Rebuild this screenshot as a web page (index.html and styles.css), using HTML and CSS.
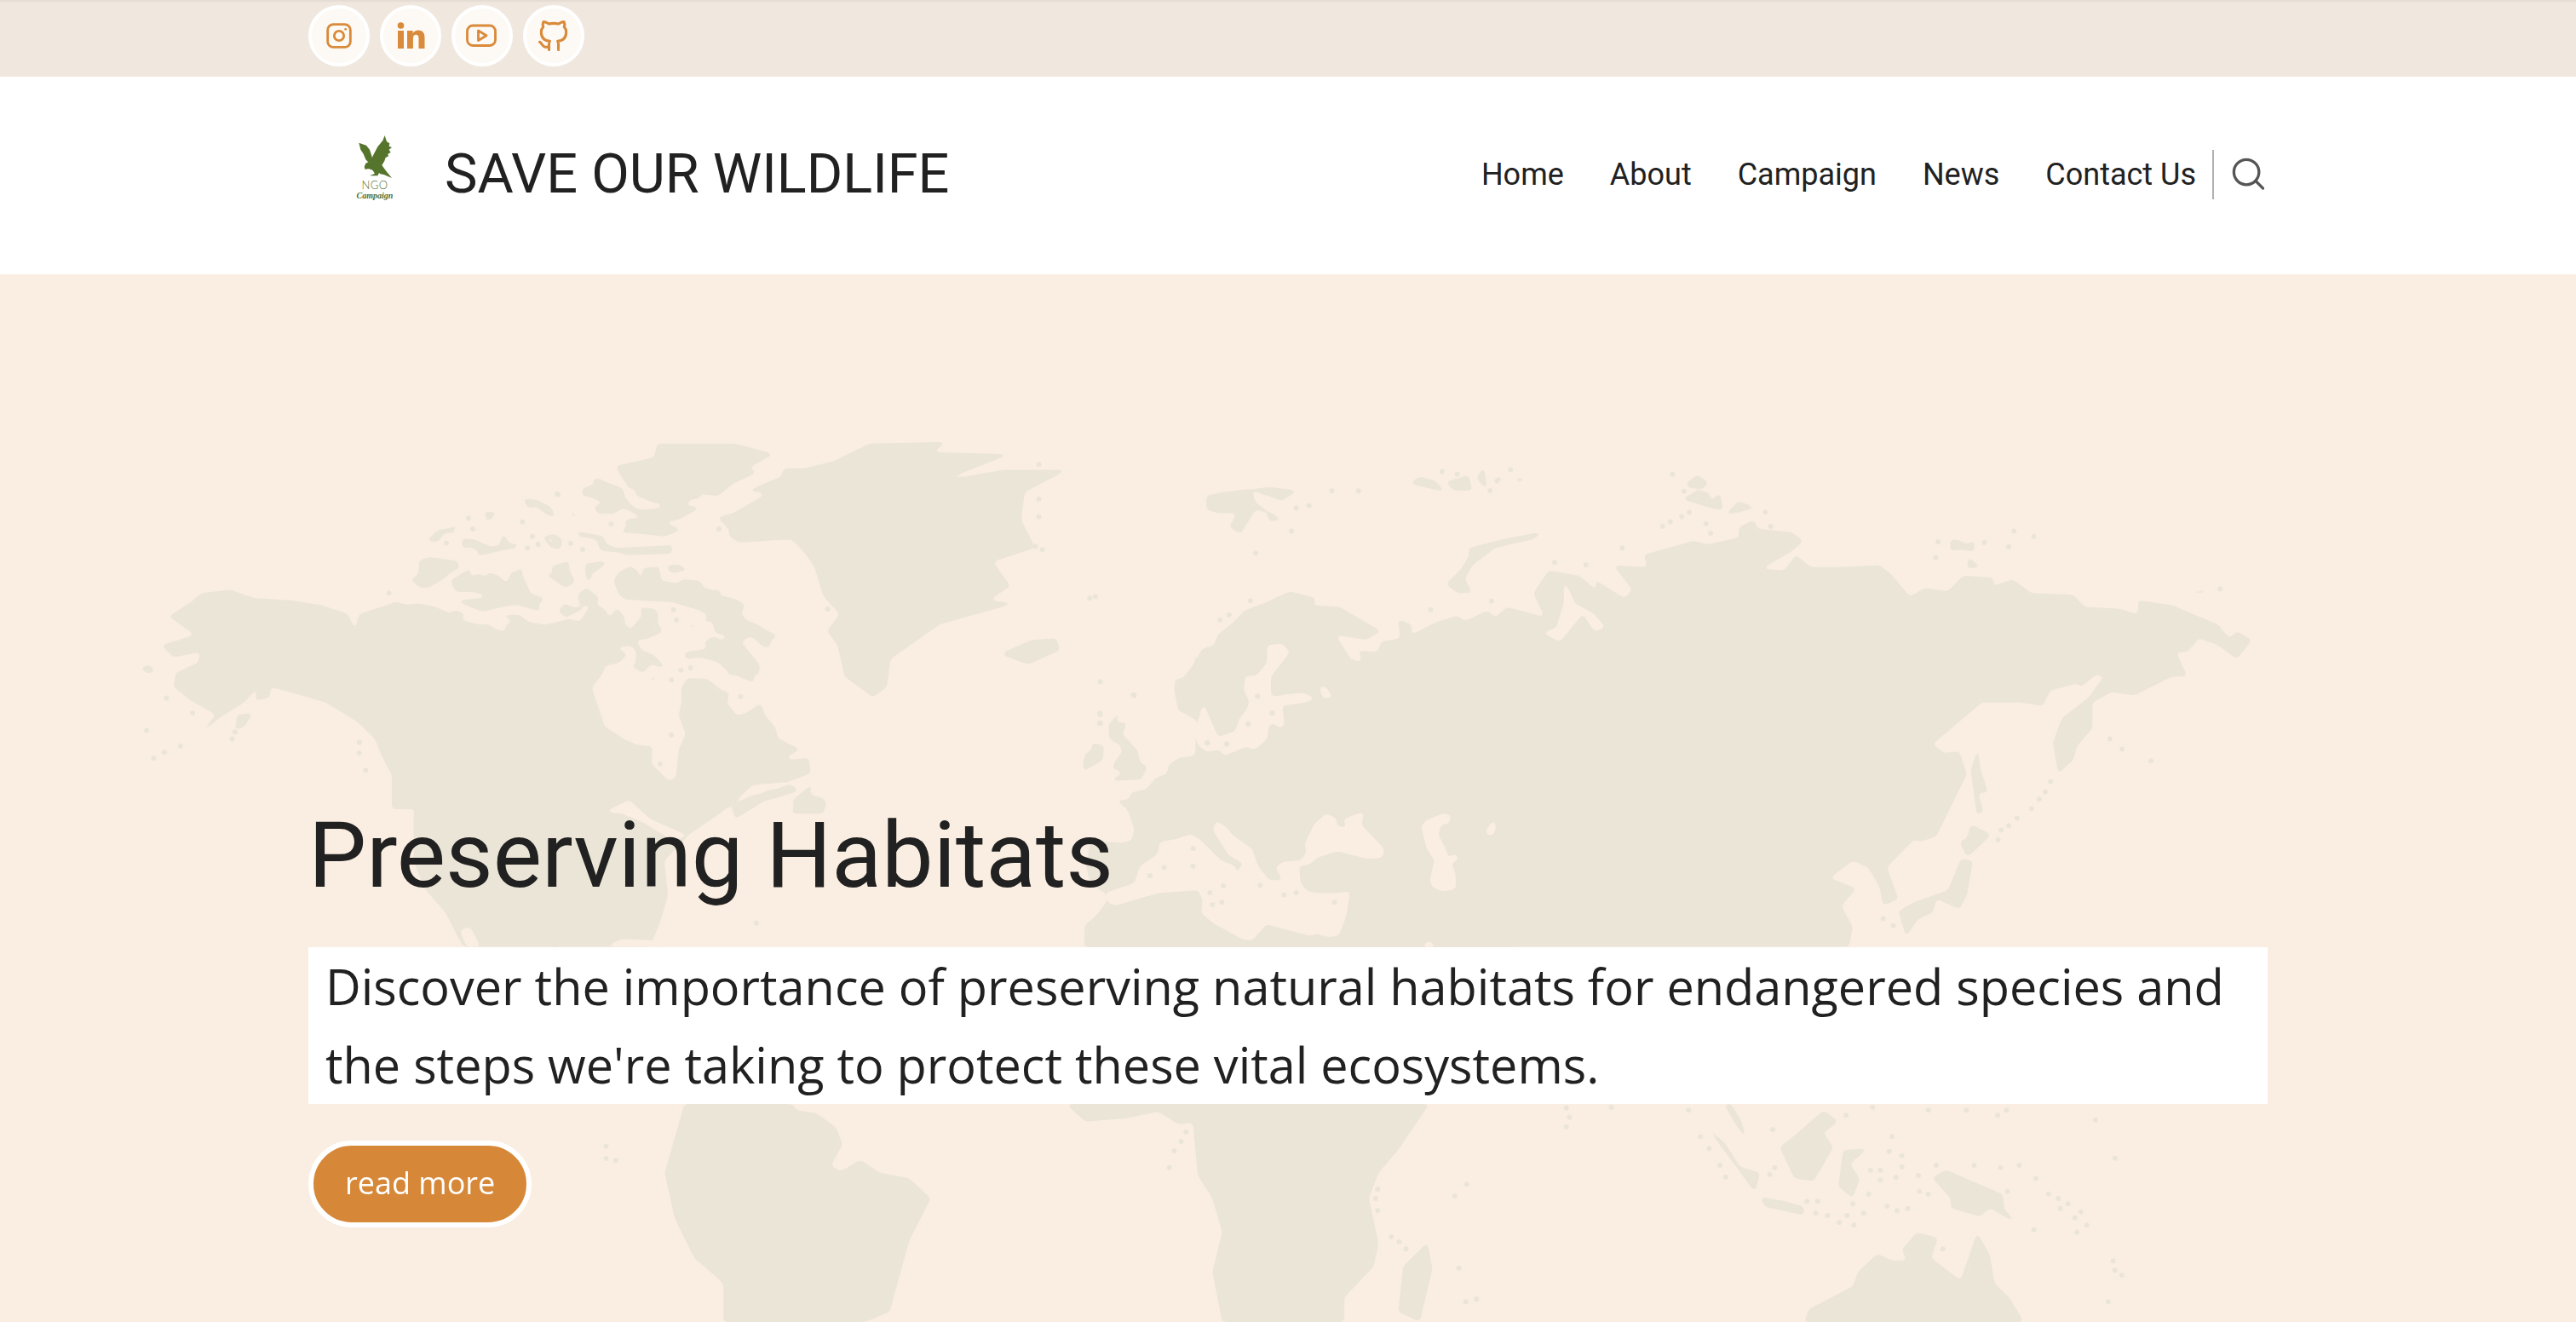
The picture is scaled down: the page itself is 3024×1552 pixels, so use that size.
FILE: index.html
```html
<!DOCTYPE html>
<html lang="en">
<head>
    <meta charset="UTF-8">
    <title>Save Our Wildlife</title>
    <link rel="stylesheet" href="styles.css">
</head>
<body>
    <div class="topbar">
        <div class="socials">
            <a class="social" href="#">
                <svg width="40" height="40" viewBox="0 0 24 24" class="icon-line"><rect x="4" y="4" width="16" height="16" rx="4"/><circle cx="12" cy="12" r="3.4"/><path d="M16.6 7.4v.01"/></svg>
            </a>
            <a class="social" href="#">
                <svg width="40" height="40" viewBox="0 0 40 40" class="icon-fill"><circle cx="8.500" cy="8" r="3.800"/><rect x="5" y="14" width="7" height="21"/><path d="M16 14h6.600v3c1.400-2.200 3.700-3.600 6.500-3.600 5.500 0 7.400 3.500 7.400 8.600v13h-7V23c0-2.700-.8-4.300-3.200-4.300-2.600 0-3.400 1.900-3.400 4.500V35H16z"/></svg>
            </a>
            <a class="social" href="#">
                <svg width="40" height="40" viewBox="0 0 40 40" class="icon-line-thick"><rect x="2.500" y="8" width="33" height="23.500" rx="6.500"/><path d="M15.500 14v11.500l9.500-5.700z"/></svg>
            </a>
            <a class="social" href="#">
                <svg width="44" height="44" viewBox="0 0 24 24" class="icon-line"><path d="M9 19c-4.300 1.400-4.300-2.500-6-3m12 5v-3.500c0-1 .1-1.400-.5-2 2.800-.3 5.500-1.400 5.500-6a4.600 4.600 0 0 0-1.300-3.200 4.200 4.200 0 0 0-.1-3.200s-1.100-.3-3.500 1.300a12.300 12.300 0 0 0-6.200 0C6.500 2.800 5.400 3.100 5.400 3.100a4.200 4.200 0 0 0-.1 3.200A4.600 4.600 0 0 0 4 9.500c0 4.600 2.700 5.700 5.500 6-.6.6-.6 1.200-.5 2V21"/></svg>
            </a>
        </div>
    </div>

    <header class="header">
        <a class="logo" href="#">
            <svg class="logo-bird" width="40" height="50" viewBox="120 90 120 150">
                <path d="M215 90L222 112 232 118 230 128 240 132 230 140 236 150 226 155 228 163 218 168 214 180 205 195 222 218 240 240 212 228 200 226 195 222 190 232 162 232 180 224 172 212 160 208 154 208 146 210 143 200 148 188 165 180 175 158 190 130 208 108z"/>
                <path d="M124 116L150 125 162 140 170 165 172 178 158 185 148 175 140 155 130 140z"/>
            </svg>
            <span class="logo-ngo">NGO</span>
            <span class="logo-campaign">Campaign</span>
        </a>
        <h1 class="site-title">SAVE OUR WILDLIFE</h1>
        <nav class="nav">
            <a href="#">Home</a>
            <a href="#">About</a>
            <a href="#">Campaign</a>
            <a href="#">News</a>
            <a href="#">Contact Us</a>
        </nav>
        <span class="divider"></span>
        <svg class="search" width="38" height="38" viewBox="0 0 40 40"><circle cx="18" cy="18" r="15.500"/><path d="M29.500 29l9 9"/></svg>
    </header>

    <section class="hero">
        <svg class="map" width="3024" height="1230" viewBox="0 322 3024 1230">
            <defs>
                <filter id="blob" x="0" y="322" width="3024" height="1230" filterUnits="userSpaceOnUse">
                    <feGaussianBlur stdDeviation="2.600"/>
                    <feComponentTransfer><feFuncA type="linear" slope="7" intercept="-3"/></feComponentTransfer>
                </filter>
            </defs>

            <g class="land" filter="url(#blob)">
                <g transform="translate(100 480) scale(.8293 .408)">
                    <path d="M118 597L150 555 165 530 205 520 240 545 290 550 335 565 372 590 382 635 388 590 440 556 700 700 750 1000 905 1155 855 1225 820 1300 825 1400 815 1470 800 1548 535 1548 510 1450 480 1380 465 1300 465 1160 480 1135 440 1075 420 1000 410 950 385 900 340 845 290 815 262 800 262 830 240 840 245 800 225 845 190 890 150 960 185 880 150 840 125 800 128 760 160 730 163 700 125 715 108 680 155 650z"/>
                    <path d="M1000 180L1060 150 1110 100 1220 95 1200 125 1310 130 1215 205 1300 175 1390 175 1330 240 1325 320 1345 400 1285 440 1310 510 1280 550 1315 560 1210 620 1140 720 1135 800 1115 830 1075 770 1065 680 1050 640 1068 590 1045 540 1030 440 1000 375 925 385 900 320 960 250z"/>
                    <path d="M750 165L805 140 810 100 920 100 975 130 930 180 895 245 840 240 770 230z"/>
                    <path d="M1300 700L1340 665 1375 660 1380 695 1335 735 1300 710z"/>
                    <path d="M215 880L238 875 225 915 212 925z"/>
                    <path d="M78 745L90 735 100 755 88 762z"/>
                    <path d="M915 1145L950 1110 1000 1080 1010 1100 960 1130 920 1180z"/>
                    <path d="M1005 1130L1030 1078 1025 1115 1050 1130 1045 1165 1000 1165z"/>
                </g>
                <g transform="translate(460 550) scale(.3333)">
                    <path d="M0 470L60 480 90 475 150 485 205 510 225 498 260 515 240 535 260 550 340 548 370 570 385 595 400 590 400 555 425 535 385 520 400 515 450 515 480 540 540 550 630 530 660 540 695 490 700 480 655 480 660 470 655 445 685 418 730 455 720 480 750 495 765 525 795 490 820 525 820 545 840 568 880 520 875 488 930 495 940 520 935 540 955 575 900 600 860 605 880 640 920 655 965 700 940 700 915 688 885 720 845 700 860 680 860 640 840 625 790 630 830 655 800 685 750 695 745 720 690 790 672 825 690 865 720 865 730 910 760 915 820 955 870 975 918 978 915 1040 975 1100 1000 1090 1010 990 1035 935 1010 870 1020 820 1020 770 1040 738 1110 740 1160 780 1190 790 1180 825 1215 870 1250 860 1300 825 1315 870 1350 910 1360 950 1440 990 1390 1015 1400 1025 1470 1020 1475 1075 1390 1105 1270 1115 1180 1200 870 1200 820 1165 770 1200 0 1200z"/>
                    <path d="M790 0L820 35 850 28 900 45 960 42 1030 15 1035 30 960 60 900 75 855 70 860 95 920 120 950 125 945 140 870 145 845 130 820 100 815 70 760 50 725 33 705 40 715 55 670 70 670 95 710 105 745 120 710 135 725 160 780 160 815 140 850 155 885 180 850 175 815 185 830 205 800 225 880 230 960 240 1020 215 960 190 1010 180 1075 145 1080 135 1035 130 1050 110 1085 105 1090 90 1150 97 1200 55 1285 15 1250-10 790-10z"/>
                    <path d="M1250 80L1310 85 1285 125 1230 150 1150 170 1155 185 1250 195 1250 210 1180 230 1210 255 1420 250 1470 320 1505 370 1510 415 1530 390 1560 420 1560 0 1380 0 1370 30 1330 45z"/>
                    <path d="M120 255L165 215 205 210 232 195 215 230 190 225 160 260z"/>
                    <path d="M305 195L340 170 310 155 370 150 350 180z"/>
                    <path d="M460 105L510 110 560 135 578 175 540 160 510 135 480 140z"/>
                    <path d="M620 150L655 160 640 175z"/>
                    <path d="M245 245L290 250 350 275 380 270 390 225 415 265 445 265 440 280 380 290 320 305 290 305 310 290 270 275 250 285z"/>
                    <path d="M530 240L575 230 600 250 595 285 560 280z"/>
                    <path d="M645 220L745 238 755 265 790 280 990 270 985 300 830 305 790 295 735 290 720 250 660 240z"/>
                    <path d="M95 325L130 312 230 325 240 350 210 365 180 390 130 420 100 420 65 392 95 370z"/>
                    <path d="M205 395L275 352 280 385 300 370 330 380 345 365 380 380 405 405 420 365 445 360 458 340 460 375 490 440 540 458 515 480 525 505 440 480 400 485 320 505 280 490 225 465 325 455 325 445 285 435 225 435z"/>
                    <path d="M530 365L570 372 560 345 625 325 625 360 645 395 640 405 610 420z"/>
                    <path d="M680 335L755 325 745 345 705 370 700 395 685 395z"/>
                    <path d="M780 395L800 365 840 342 870 365 875 420 885 350 940 345 950 395 1010 405 1020 390 1085 395 1100 420 1140 430 1165 425 1150 445 1210 460 1245 480 1230 510 1250 535 1290 550 1320 570 1360 590 1335 605 1330 630 1310 630 1265 590 1230 610 1295 690 1295 720 1270 735 1285 760 1215 730 1185 725 1180 710 1145 680 1080 665 1040 672 1025 655 1040 645 1110 635 1100 610 1135 590 1160 605 1185 590 1140 580 1125 535 1100 545 1110 515 1085 500 985 470 820 462 800 445z"/>
                    <path d="M585 500L610 475 640 490 690 485 665 500 610 525z"/>
                    <path d="M970 340L1010 338 1045 358 990 368 972 360z"/>
                    <path d="M900 745L932 728 935 740 908 752z"/>
                    <path d="M1040 560L1070 540 1072 555 1050 565z"/>
                    <path d="M1210 1180L1270 1150 1300 1160 1270 1200z"/>
                    <path d="M1310 1135L1350 1130 1365 1150 1340 1160z"/>
                    <path d="M1410 1170L1480 1110 1460 1145 1520 1160 1525 1200 1420 1200z"/>
                </g>
                <g transform="translate(1260 800) scale(.3333)">
                    <path d="M360 -10L355 30 370 105 400 115 458 75 430 170 430 260 370 270 335 295 330 325 290 340 255 380 205 390 195 415 150 420 190 450 215 520 205 560 175 568 60 560 45 650 60 715 112 745 118 775 85 820 40 860 38 936 1560 936 1560-10z"/>
                    <path d="M178 88L125 150 125 200 165 225 172 250 150 275 135 305 165 315 170 325 125 352 240 345 262 300 235 285 225 240 172 185 190 145 150 145z"/>
                    <path d="M65 215L108 225 105 275 35 318 35 280 42 255 65 240z"/>
                </g>
                <g transform="translate(1300 480) scale(.8929 .408)">
                    <path d="M90 800L110 745 125 690 140 680 145 650 165 615 180 580 210 555 240 525 275 545 270 565 305 570 360 640 340 665 300 650 320 720 335 730 330 695 355 700 360 670 385 660 382 605 400 620 400 650 430 615 460 595 470 610 500 580 510 600 525 570 560 590 575 600 560 530 580 465 620 480 645 525 640 490 680 545 690 520 665 450 710 455 705 420 770 380 790 390 830 370 830 340 850 320 855 345 900 355 915 380 900 410 860 460 890 465 905 420 925 455 960 455 1015 450 1030 475 1055 540 1075 515 1105 525 1125 480 1165 485 1165 510 1190 490 1215 530 1270 535 1285 570 1330 575 1355 592 1355 550 1400 565 1460 620 1475 660 1485 640 1505 665 1485 720 1460 680 1435 660 1420 700 1405 700 1420 770 1400 770 1350 825 1320 815 1295 845 1295 920 1275 970 1270 1010 1250 1050 1243 960 1255 890 1290 830 1310 770 1300 765 1280 800 1275 790 1240 810 1230 855 1200 845 1150 845 1085 965 1100 990 1120 985 1130 1050 1090 1230 1070 1245 1060 1240 1025 1320 1040 1410 1020 1430 1015 1375 1000 1320 980 1300 950 1350 985 1380 965 1430 980 1490 975 1548 200 1548 200 1000 100 875z"/>
                    <path d="M130 250L150 240 190 230 215 225 250 235 230 265 190 235 195 270 230 320 212 325 210 300 195 290 175 360 160 340 170 300 145 300 130 290z"/>
                    <path d="M397 215L410 195 430 205 445 240 425 230z"/>
                    <path d="M445 210L475 190 480 235 455 235z"/>
                    <path d="M485 200L495 165 500 235z"/>
                    <path d="M508 200L522 192 510 225z"/>
                    <path d="M530 205L548 195 545 212z"/>
                    <path d="M445 505L465 460 475 425 475 400 520 375 575 352 560 375 510 400 480 450 470 490 480 530 460 530z"/>
                    <path d="M760 215L775 190 790 210 785 228 765 228z"/>
                    <path d="M755 260L775 235 790 240 795 265 805 240 810 290 800 290z"/>
                    <path d="M812 305L830 265 852 285 830 298z"/>
                    <path d="M1108 375L1120 378 1130 390 1140 378 1140 410 1120 405 1108 410z"/>
                    <path d="M1132 425L1148 455 1130 460z"/>
                    <path d="M1420 530L1445 518 1442 530 1422 535z"/>
                    <path d="M1145 970L1135 1040 1143 1170 1152 1160 1145 1105 1158 1105 1147 1030z"/>
                    <path d="M1135 1195L1162 1225 1145 1262 1130 1290 1120 1245 1130 1235z"/>
                    <path d="M1122 1295L1138 1300 1130 1400 1120 1440 1090 1410 1085 1450 1065 1470 1050 1520 1040 1445 1060 1420 1105 1385z"/>
                </g>
                <g transform="translate(700 1280) scale(1.148 .3333)">
                    <path d="M90 48L70 290 80 450 100 590 130 680 130 816 275 816 300 780 320 530 342 380 320 310 290 290 270 245 250 285 240 265 252 190 245 130 225 80 205 70 200 48z"/>
                    <path d="M480 48L500 110 540 100 575 75 595 120 610 115 615 300 630 380 640 500 630 640 640 816 765 816 765 730 795 620 800 540 790 380 800 290 820 210 852 48z"/>
                    <path d="M850 535L825 620 820 780 842 816 855 630z"/>
                    <path d="M1130 105L1185 360 1190 290 1170 270 1155 190z"/>
                    <path d="M1153 48L1165 120 1178 185 1170 100 1160 48z"/>
                    <path d="M1255 70L1225 160 1210 200 1225 310 1245 320 1265 200 1255 150 1270 110z"/>
                    <path d="M1190 375L1195 410 1235 440 1235 410 1215 390z"/>
                    <path d="M1275 210L1270 340 1285 380 1292 310 1282 260 1300 205z"/>
                    <path d="M1350 250L1385 380 1385 415 1415 445 1425 415 1455 475 1440 420 1438 365 1380 280 1365 310z"/>
                    <path d="M1235 816L1240 770 1285 690 1290 640 1310 575 1325 600 1340 600 1335 560 1350 500 1372 520 1365 590 1395 670 1412 500 1425 580 1430 680 1445 730 1460 816z"/>
                    <path d="M1305 480L1320 420 1315 450z"/>
                    <path d="M1460 375L1468 320 1458 370z"/>
                </g>
            </g>

            <g class="water" filter="url(#blob)">
                <g transform="translate(100 480) scale(.8293 .408)">
                    <path d="M735 1160L770 1125 800 1180 855 1230 830 1240 790 1190 760 1165z"/>
                    <path d="M530 1500L545 1490 560 1548 540 1548z"/>
                    <path d="M735 1548L760 1525 810 1530 815 1548z"/>
                </g>
                <g transform="translate(1260 800) scale(.3333)">
                    <path d="M458 75L490 150 510 195 570 175 585 130 610 100 620 70 600 30 605-20 685-20 700 55 750 45 810 40 855 60 810 75 735 85 740 125 745 150 730 165 700 145 685 165 685 200 640 240 610 230 530 262 515 240 470 248 440 225 425 185z"/>
                    <path d="M865 20L885 15 915 55 880 60z"/>
                    <path d="M112 745L140 735 215 710 235 650 295 610 305 565 360 555 415 538 450 560 520 630 570 650 580 700 585 650 610 650 545 610 490 520 505 490 540 515 560 540 630 590 650 650 690 700 738 700 710 655 740 635 800 630 820 605 815 570 850 500 890 465 925 480 930 510 965 515 950 485 1025 458 1015 505 1095 590 1090 620 1040 625 930 598 860 620 830 645 795 650 800 710 825 738 855 745 930 745 975 738 960 830 935 895 900 900 860 890 830 895 680 855 630 912 600 910 490 850 450 815 455 770 440 735 300 745 145 790 118 775z"/>
                    <path d="M1225 510L1240 490 1300 465 1330 470 1325 500 1295 505 1285 540 1312 590 1320 622 1345 605 1358 628 1330 640 1345 670 1348 730 1300 740 1265 725 1255 700 1272 630 1245 590z"/>
                    <path d="M1452 525L1480 488 1490 510 1480 540 1460 545z"/>
                    <path d="M1225 936L1250 912 1285 936z"/>
                </g>
                <g transform="translate(1300 480) scale(.8929 .408)">
                    <path d="M180 810L210 730 210 680 230 675 240 700 215 770 215 810z"/>
                    <path d="M600 490L615 560 640 590 655 630 640 640 625 590 595 670 572 645 590 630 600 560z"/>
                </g>
                <g transform="translate(460 550) scale(.3333)">
                    <path d="M545 240L565 245 570 262 555 262z"/>
                    <path d="M860 380L875 440 885 440 870 415 868 375z"/>
                </g>
            </g>

            <g class="dots-small">
                <g transform="translate(100 480) scale(.8293 .408)"><path d="M87 925h0M97 1005h0M112 988h0M135 970h0M152 875h0M115 832h0M208 950h0M212 930h0M388 960h0M388 990h0M397 1040h0M430 530h0M668 245h0M1350 160h0M1350 260h0M1350 310h0M1355 405h0M1345 395h0M1430 540h0M1422 545h0M1437 880h0M1437 905h0M1485 825h0M1437 785h0M757 1093h0M855 1150h0M950 1480h0M665 1545h0"/></g>
                <g transform="translate(460 550) scale(.3333)"><path d="M270 175h0M285 213h0M192 263h0M585 92h0M460 188h0M495 239h0M478 280h0M515 267h0M630 263h0M672 285h0M772 196h0M992 498h0M1002 533h0M1018 710h0M1052 702h0M985 745h0M984 938h0M945 1040h0M802 1128h0M1152 213h0M1228 803h0M1535 495h0"/></g>
                <g transform="translate(1260 800) scale(.3333)"><path d="M212 48h0M93 112h0M93 146h0M270 684h0M320 655h0M422 588h0M421 650h0M528 720h0M481 744h0M490 786h0M523 778h0M658 718h0M742 752h0M785 744h0M920 778h0M650 52h0M700 112h0M616 150h0M473 217h0M540 220h0"/></g>
                <g transform="translate(1300 480) scale(.8929 .408)"><path d="M295 236h0M330 236h0M265 278h0M248 285h0M242 352h0M195 415h0M440 180h0M460 188h0M530 175h0M503 235h0M743 188h0M758 237h0M730 338h0M740 325h0M755 310h0M765 297h0M787 330h0M793 358h0M865 297h0M872 338h0M677 400h0M588 442h0M629 449h0M1092 383h0M1089 428h0M1153 385h0M1192 352h0M1218 367h0M1185 397h0M1463 518h0M505 553h0M425 578h0M188 552h0M160 593h0M148 607h0M118 723h0M34 823h0M197 827h0M217 875h0M185 907h0M131 962h0M157 965h0M1318 950h0M1334 979h0M1372 1013h0M1240 1072h0M1233 1102h0M1225 1123h0M1215 1150h0M1196 1178h0M1185 1199h0M1175 1212h0M1171 1240h0M1020 1467h0M1033 1487h0"/></g>
                <g transform="translate(700 1280) scale(1.148 .3333)"><path d="M10 197h0M10 240h0M20 247h0M603 147h0M598 180h0M591 214h0M586 272h0M799 348h0M797 381h0M799 424h0M890 331h0M878 373h0M813 516h0M821 533h0M828 559h0M882 626h0M889 745h0M900 736h0M992 62h0M995 95h0M992 129h0M1038 60h0M1117 70h0M1203 138h0M1129 163h0M1138 205h0M1149 264h0M1205 272h0M1200 297h0M1155 305h0M1278 88h0M1305 60h0M1362 70h0M1401 70h0M1433 88h0M1442 70h0M1533 104h0M1553 239h0M1325 163h0M1322 215h0M1335 230h0M1335 270h0M1303 281h0M1313 281h0M1313 316h0M1329 306h0M1352 300h0M1370 264h0M1409 264h0M1436 272h0M1455 264h0M1472 310h0M1443 356h0M1353 356h0M1362 365h0M1301 365h0M1285 400h0M1238 391h0M1249 391h0M1247 433h0M1259 441h0M1279 441h0M1296 433h0M1320 408h0M1330 424h0M1341 416h0M1271 466h0M1286 475h0M1485 365h0M1495 381h0M1505 400h0M1497 416h0M1518 428h0M1512 449h0M1524 475h0M1514 500h0M1470 491h0M1377 559h0M1551 601h0M1553 634h0M1560 651h0M1546 745h0"/></g>
            </g>
        </svg>

        <div class="hero-content">
            <h2 class="hero-title">Preserving Habitats</h2>
            <p class="hero-text">Discover the importance of preserving natural habitats for endangered species and the steps we're taking to protect these vital ecosystems.</p>
            <a class="btn" href="#">read more</a>
        </div>
    </section>
</body>
</html>
```

FILE: styles.css
```css
html, body {
    margin: 0;
    height: 1552px;
    overflow: hidden;
    background-color: #faeee2;
}
body {
    font-family: Roboto, sans-serif;
    color: #212121;
}
a {
    color: inherit;
    text-decoration: none;
}

.topbar {
    height: 90px;
    box-sizing: border-box;
    padding: 6px 362px 0;
    background-color: #f0e8df;
    box-shadow: inset 0 3px 2px -1px #e4dcd3;
}
.socials {
    display: flex;
    gap: 12px;
}
.social {
    width: 72px;
    height: 72px;
    box-sizing: border-box;
    display: flex;
    align-items: center;
    justify-content: center;
    border: 4px solid #fff;
    border-radius: 50%;
    background-color: #fdfaf5;
}
.icon-line, .icon-line-thick {
    fill: none;
    stroke: #d98a3a;
    stroke-linecap: round;
    stroke-linejoin: round;
}
.icon-line {
    stroke-width: 1.700;
}
.icon-line-thick {
    stroke-width: 2.800;
}
.icon-fill {
    fill: #d98a3a;
}

.header {
    height: 232px;
    box-sizing: border-box;
    padding: 0 362px;
    display: flex;
    align-items: center;
    background-color: #fff;
}
.logo {
    width: 156px;
    margin: 0 4px 18px 0;
    display: flex;
    flex-direction: column;
    align-items: center;
    color: #4f6f2c;
}
.logo-bird {
    fill: #56752c;
}
.logo-ngo {
    margin-top: 2px;
    font: 300 13px/13px Lato, sans-serif;
    letter-spacing: .5px;
}
.logo-campaign {
    font: italic 700 10px/12px "Liberation Serif", serif;
}
.site-title {
    margin: 0 0 2px;
    font-weight: 400;
    font-size: 64.8px;
    line-height: 1.2;
}
.nav {
    margin: 0 0 2px auto;
    display: flex;
    gap: 54px;
    font-size: 36px;
}
.divider {
    width: 2px;
    height: 58px;
    margin: 0 21px 2px 19px;
    background-color: #b0b0b0;
}
.search {
    margin: 0 4px 5px 0;
    fill: none;
    stroke: #555;
    stroke-width: 3.500;
    stroke-linecap: round;
}

.hero {
    position: relative;
    height: 1230px;
    overflow: hidden;
    display: flex;
    flex-direction: column;
    justify-content: flex-end;
    box-sizing: border-box;
    padding: 0 362px 111px;
    background-color: #faeee2;
}
/* the map only sits behind the hero text */
.map {
    position: absolute;
    top: 0;
    left: 0;
}
.land {
    fill: #ebe5d8;
}
.water {
    fill: #faeee2;
}
.dots-small {
    fill: none;
    stroke: #ebe5d8;
    stroke-width: 6px;
    stroke-linecap: round;
}
.dots-small path {
    vector-effect: non-scaling-stroke;
}
.hero-content {
    position: relative;
}
.hero-title {
    margin: 0 0 42px;
    font-weight: 400;
    font-size: 108px;
    line-height: 1.2;
}
.hero-text {
    margin: 0 0 43px;
    padding: 0 20px;
    background-color: #fff;
    font-family: "Open Sans", sans-serif;
    font-size: 57.6px;
    line-height: 92px;
}
.btn {
    display: inline-block;
    box-sizing: border-box;
    height: 102px;
    padding: 0 37px;
    border: 6px solid #fff;
    border-radius: 51px;
    background-color: #d68838;
    color: #fff;
    font-family: "Open Sans", sans-serif;
    font-size: 36px;
    line-height: 88px;
}
```
